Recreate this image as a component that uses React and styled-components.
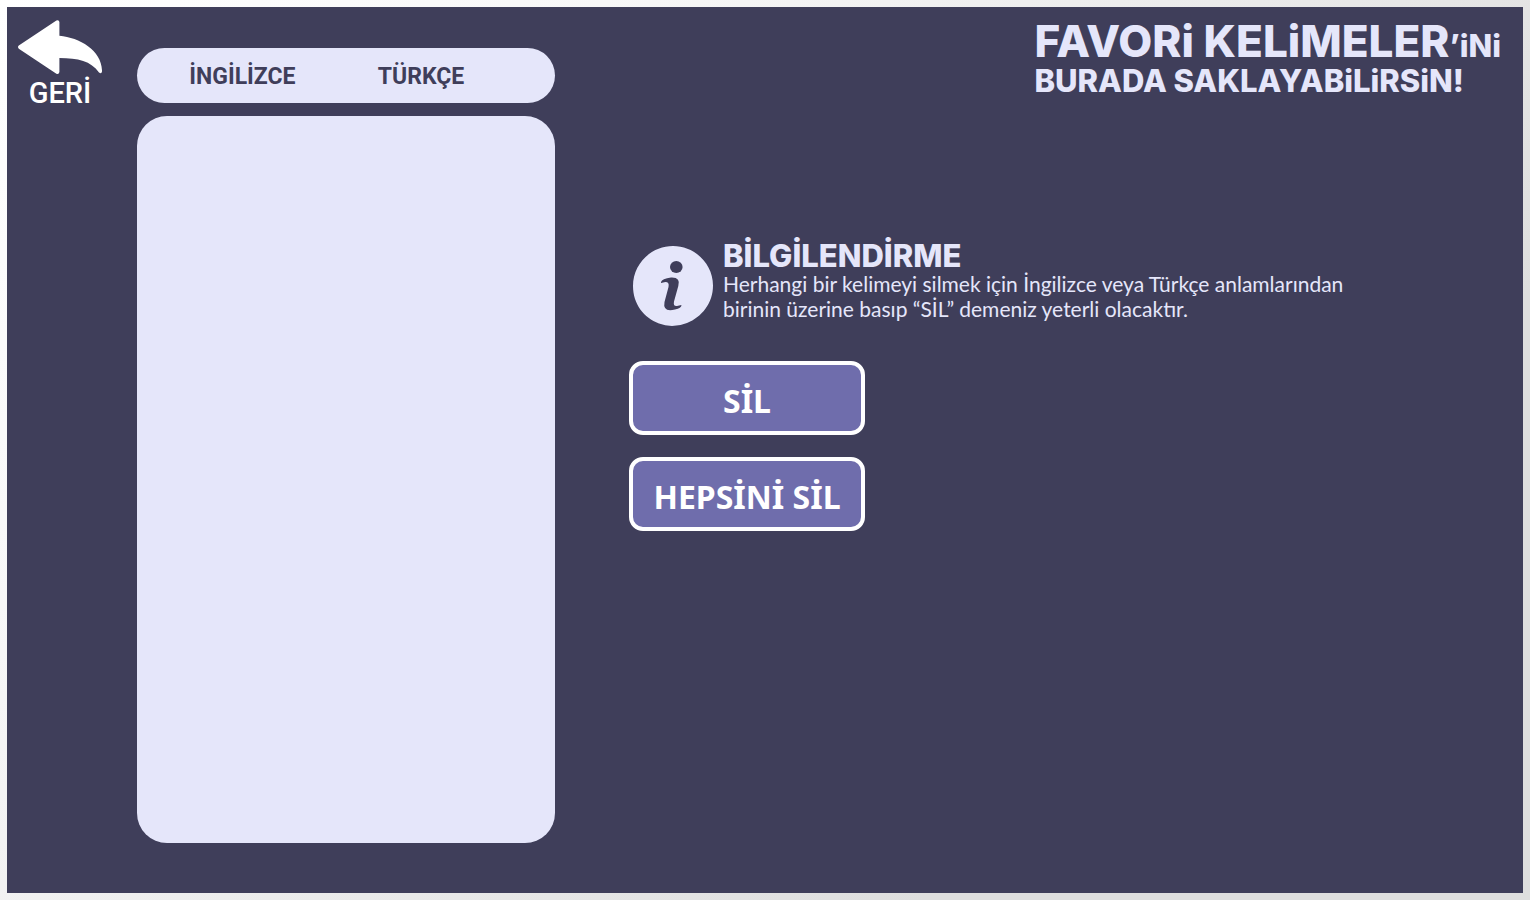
import React from 'react';
import styled, { createGlobalStyle } from 'styled-components';

const ink = '#3f3e5a';
const lavender = '#e5e6fa';

const GlobalStyle = createGlobalStyle`
  *, *::before, *::after { box-sizing: border-box; }
  body { margin: 0; font-family: Inter, "Liberation Sans", sans-serif; }
  h1, h2, p { margin: 0; }
`;

const Page = styled.div`
  min-height: 100vh;
  padding: 7px;
  display: flex;
  background: linear-gradient(135deg, #ffffff, #f8f8f8 25%, #dedede 75%, #dedede);
`;

const Board = styled.main`
  flex: 1;
  display: flex;
  background: ${ink};
  color: ${lavender};
`;

const Side = styled.nav`
  flex: 0 0 130px;
  padding: 13px 0 0 11px;
`;

const BackButton = styled.button`
  display: flex;
  flex-direction: column;
  align-items: center;
  width: 84px;
  padding: 0;
  border: 0;
  background: none;
  color: #fff;
  font: 500 29px/38px Roboto, "Liberation Sans", sans-serif;
  cursor: pointer;

  svg { display: block; }
`;

const Words = styled.section`
  flex: 0 1 418px;
  display: flex;
  flex-direction: column;
  gap: 13px;
  padding: 41px 0 50px;
`;

const ColumnBar = styled.header`
  display: flex;
  height: 55px;
  padding-left: 12px;
  border-radius: 28px;
  background: ${lavender};
  color: ${ink};
`;

const ColumnName = styled.h2`
  flex: 0 0 ${({ $share }) => $share};
  text-align: center;
  font: 700 23px/58px Roboto, "Liberation Sans", sans-serif;
`;

const WordList = styled.ul`
  flex: 1;
  margin: 0;
  padding: 0;
  list-style: none;
  border-radius: 30px;
  background: ${lavender};
`;

const Content = styled.section`
  flex: 1;
  display: flex;
  flex-direction: column;
  padding: 12px 22px 0 74px;
`;

const Title = styled.h1`
  align-self: flex-end;
  font-size: 44px;
  line-height: 44px;
  font-weight: 800;
  white-space: nowrap;
`;

const TitleSuffix = styled.span`
  font-size: 31px;
  line-height: 31px;
`;

const TitleLine = styled.span`
  display: block;
  font-size: 31px;
  line-height: 36px;
`;

const Info = styled.div`
  display: flex;
  gap: 10px;
  margin: 142px 0 35px 4px;
`;

const InfoIcon = styled.svg`
  flex: none;
  margin-top: 5px;
`;

const InfoTitle = styled.h2`
  font-size: 31px;
  line-height: 30px;
  font-weight: 800;
`;

const InfoText = styled.p`
  max-width: 640px;
  font: 400 21px/25px Lato, "Liberation Sans", sans-serif;
`;

const Actions = styled.div`
  display: flex;
  flex-direction: column;
  align-items: flex-start;
  gap: 22px;
`;

const ActionButton = styled.button`
  width: 236px;
  height: 74px;
  padding: 6px 0 0;
  border: 4px solid #fff;
  border-radius: 14px;
  background: #6f6dac;
  color: #fff;
  font: 700 32px/40px "Noto Sans", "Liberation Sans", sans-serif;
  white-space: nowrap;
  cursor: pointer;
`;

export default function App() {
  return (
    <>
      <GlobalStyle />
      <Page lang="tr">
        <Board>
          <Side>
            <BackButton type="button">
              <svg width="84" height="54" viewBox="0 0 84 54" fill="#fff" aria-hidden="true">
                <path d="M0.8 25.4 38.4 0.5Q41 -0.5 41.4 2V15.7C62 17.5 84.5 31 84 51.5Q83.5 54.5 81 52.5C73 41 60 38 41.4 38V52Q41 54.5 38.4 53.7L0.8 28.7Q-0.8 27 0.8 25.4Z" />
              </svg>
              GERİ
            </BackButton>
          </Side>

          <Words>
            <ColumnBar>
              <ColumnName $share="46%">İNGİLİZCE</ColumnName>
              <ColumnName $share="42%">TÜRKÇE</ColumnName>
            </ColumnBar>
            <WordList />
          </Words>

          <Content>
            <Title>
              FAVORi KELiMELER<TitleSuffix>’iNi</TitleSuffix>
              <TitleLine>BURADA SAKLAYABiLiRSiN!</TitleLine>
            </Title>

            <Info>
              <InfoIcon width="80" height="80" viewBox="0 0 80 80" aria-hidden="true">
                <path d="M40 0C62 0 80 18 80 39.500C80 57 69 71 54 77Q47 80 39 80Q32 79.500 26 77.500C11 72 0 58 0 40C0 18 18 0 40 0Z" fill={lavender} />
                <ellipse cx="43.300" cy="21" rx="6.300" ry="6" fill={ink} />
                <path d="M28 36Q29 32.500 38 31.500Q48 31 45.300 40L41 55.500Q40 60.500 44 60Q46 59.500 48.500 59Q48.500 62 42 63.500Q29.500 66.500 31.500 56L35.500 41Q36.500 36 32.500 36Q30 36.500 28 37Z" fill={ink} />
              </InfoIcon>
              <div>
                <InfoTitle>BİLGİLENDİRME</InfoTitle>
                <InfoText>
                  Herhangi bir kelimeyi silmek için İngilizce veya Türkçe anlamlarından
                  birinin üzerine basıp “SİL” demeniz yeterli olacaktır.
                </InfoText>
              </div>
            </Info>

            <Actions>
              <ActionButton type="button">SİL</ActionButton>
              <ActionButton type="button">HEPSİNİ SİL</ActionButton>
            </Actions>
          </Content>
        </Board>
      </Page>
    </>
  );
}
